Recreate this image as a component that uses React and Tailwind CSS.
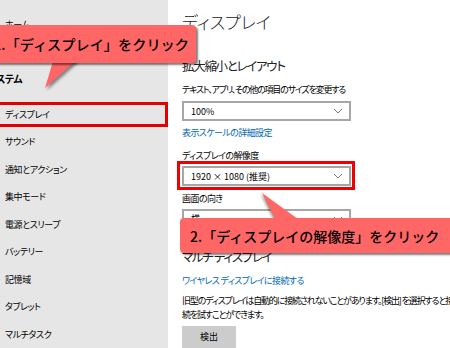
import React from 'react';

const sidebarItems = ['ディスプレイ', 'サウンド', '通知とアクション', '集中モード', '電源とスリープ', 'バッテリー', '記憶域', 'タブレット', 'マルチタスク'];

const Chevron = () => (
    <svg width="10" height="6" viewBox="0 0 10 6" className="shrink-0">
        <path d="M1 1 L5 5 L9 1" fill="none" stroke="#777" strokeWidth="1" />
    </svg>
);

const Dropdown = ({ value }) => (
    <div className="w-[169px] h-[20px] border-2 border-[#a6a6a6] bg-white flex items-center justify-between pl-[7px] pr-[6px]">
        <span className="text-[9px] leading-none">{value}</span>
        <Chevron />
    </div>
);

const App = () => {
    return (
        <div className="relative w-[450px] h-[348px] overflow-hidden flex bg-white text-black font-['Noto_Sans_CJK_JP',sans-serif] [font-feature-settings:'palt']">
            {/* sidebar */}
            <div className="w-[168px] shrink-0 bg-[#e6e6e6] flex flex-col tracking-[-0.4px]">
                <div className="h-[15px]" />
                <div className="pl-[5px] text-[9px] leading-[20px]">ホーム</div>
                <div className="h-[36px]" />
                <div className="-ml-[13px] text-[10px] font-bold leading-[20px]">システム</div>
                <div className="h-[12px]" />
                {sidebarItems.map((item, i) => (
                    <div key={item} className="relative h-[28.4px] flex items-center pl-[5px] text-[9px]">
                        {item}
                        {i === 0 && (
                            <div className="absolute -left-[4px] right-0 top-[1px] bottom-[1px] border-[3px] border-[#e30000]" />
                        )}
                    </div>
                ))}
            </div>

            {/* main */}
            <div className="flex-1 pl-[14px] flex flex-col">
                <div className="h-[10px]" />
                <div className="text-[17px] font-light leading-[24px] text-[#222]">ディスプレイ</div>
                <div className="h-[23px]" />
                <div className="text-[12.5px] leading-[18px] tracking-[-1.3px] text-[#222]">拡大縮小とレイアウト</div>
                <div className="h-[9px]" />
                <div className="text-[9px] leading-[12px] tracking-[-1.2px] whitespace-nowrap">テキスト、アプリ、その他の項目のサイズを変更する</div>
                <div className="h-[6px]" />
                <Dropdown value="100%" />
                <div className="h-[6px]" />
                <div className="text-[9px] leading-[12px] tracking-[-0.6px] text-[#0067b8]">表示スケールの詳細設定</div>
                <div className="h-[11px]" />
                <div className="text-[9px] leading-[12px] tracking-[-0.6px]">ディスプレイの解像度</div>
                <div className="h-[4px]" />
                <div className="relative">
                    <Dropdown value="1920 × 1080 (推奨)" />
                    <div className="absolute -left-[5px] top-[-5px] w-[178px] h-[29px] border-[3px] border-[#f00000]" />
                </div>
                <div className="h-[7px]" />
                <div className="text-[9px] leading-[12px] tracking-[-0.6px]">画面の向き</div>
                <div className="h-[4px]" />
                <Dropdown value="横" />
                <div className="h-[19px]" />
                <div className="text-[12.5px] leading-[18px] tracking-[-1.3px] text-[#222]">マルチ ディスプレイ</div>
                <div className="h-[10px]" />
                <div className="text-[9px] leading-[12px] tracking-[-0.6px] text-[#0067b8]">ワイヤレス ディスプレイに接続する</div>
                <div className="h-[7px]" />
                <div className="text-[9px] leading-[14px] tracking-[-1.15px] whitespace-nowrap">
                    旧型のディスプレイは自動的に接続されないことがあります。[検出] を選択すると接<br />
                    続を試すことができます。
                </div>
                <div className="h-[4px]" />
                <div className="w-[54px] h-[22px] bg-[#cccccc] flex items-center justify-center text-[9px]">検出</div>
            </div>

            {/* callout 1 */}
            <svg className="absolute left-0 top-0 drop-shadow-[2px_2px_1.5px_rgba(0,0,0,0.45)]" width="100" height="100">
                <polygon points="54,58 79,58 45,88" fill="#ff6666" />
            </svg>
            <div className="absolute left-[-60px] top-[25px] w-[256px] h-[38px] rounded-[4px] bg-[#ff6666] shadow-[2px_2px_2px_rgba(0,0,0,0.5)] flex items-center justify-end pr-[7px]">
                <span className="text-[14.2px] font-medium leading-none whitespace-nowrap [font-feature-settings:normal]">1.「ディスプレイ」をクリック</span>
            </div>

            {/* callout 2 */}
            <svg className="absolute left-[240px] top-[180px] drop-shadow-[-1px_1px_1.5px_rgba(0,0,0,0.45)]" width="100" height="50">
                <polygon points="22,13 38,45 66,45" fill="#ff6666" />
            </svg>
            <div className="absolute left-[180px] top-[218px] w-[300px] h-[35px] rounded-[4px] bg-[#ff6666] shadow-[2px_2px_2px_rgba(0,0,0,0.5)] flex items-center pl-[10px]">
                <span className="text-[14px] font-medium leading-none whitespace-nowrap [font-feature-settings:normal]">2.「ディスプレイの解像度」をクリック</span>
            </div>
        </div>
    );
};

export default App;
